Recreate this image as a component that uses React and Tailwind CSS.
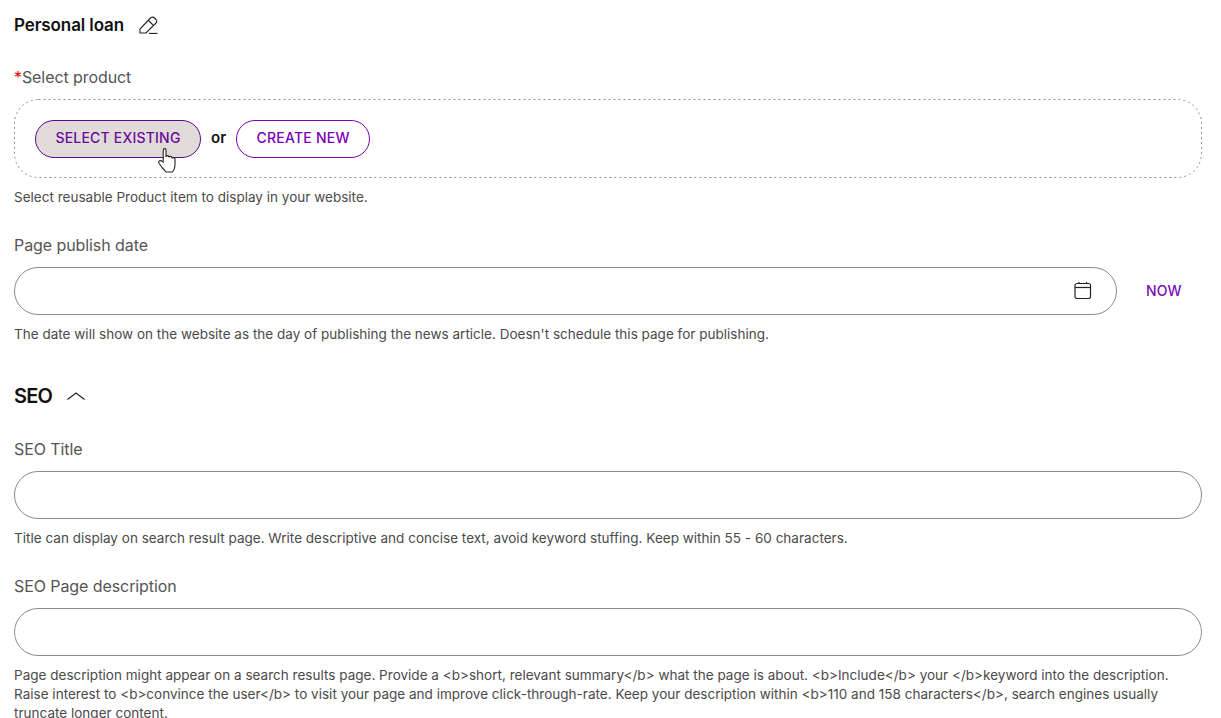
import React from 'react';

const font = "font-['Inter','Liberation_Sans',sans-serif]";

const Label = ({ children }) => (
    <label className="block h-5 text-[16px] leading-5 tracking-[-0.08px] text-[#555555]">{children}</label>
);

const Help = ({ children }) => (
    <p className="text-[13.5px] leading-[19px] tracking-[0.015px] text-[#4a4a4a]">{children}</p>
);

const TextInput = () => (
    <input className="block h-12 w-full rounded-3xl border border-[#8c8c8c] bg-white px-6 outline-none" />
);

export default function App() {
    return (
        <div className={`${font} h-[718px] overflow-hidden bg-white px-[14px] pr-[19px] pt-[15px]`}>
            <div className="flex h-5 items-center">
                <h1 className="text-[17px] font-semibold leading-5 tracking-[-0.1px] text-[#111111]">Personal loan</h1>
                <svg className="ml-[15px]" width="20" height="20" viewBox="0 0 20 20" fill="none" stroke="#222222" strokeWidth="1.1">
                    <path d="M1 18 V14 L11 3.5 Q13.5 1 15.5 3 L17 4.5 Q18.8 6.5 16.5 8.5 L7 18 Z" />
                    <path d="M9.5 5.5 L14 10" />
                    <path d="M10 18.4 H18.5" />
                </svg>
            </div>

            <div className="mt-[32px]">
                <Label><span className="text-[#e00000]">*</span>Select product</Label>
            </div>
            <div className="relative mt-3 flex h-[79px] items-center pl-[21px]">
                {/* dotted outline, css dashed renders too dense here */}
                <svg className="absolute left-0 top-0" width="1188" height="79" fill="none">
                    <rect x="0.5" y="0.5" width="1187" height="78" rx="24" stroke="#8f8f8f" strokeDasharray="2 3" />
                </svg>
                <button className="relative h-[38px] w-[166px] rounded-full border border-[#5b0a8c] bg-[#e0dbd9] pb-[2px] text-[14px] font-medium tracking-[0.2px] text-[#6a0a9c]">
                    SELECT EXISTING
                    <svg className="absolute left-[122px] top-[27px]" width="20" height="25" viewBox="0 0 20 25" fill="#ffffff" stroke="#222222" strokeWidth="1.1">
                        <path d="M5.2 14 V2.2 Q5.2 0.6 6.6 0.6 Q8 0.6 8 2.2 V9 Q8 7.6 9.6 7.6 Q11 7.6 11 9 V9.6 Q11 8.4 12.6 8.4 Q14 8.4 14 10 V10.6 Q14 9.6 15.4 9.6 Q17 9.6 17 11.2 V17 Q17 21 14.5 24 H8 Q6.5 22 4 19.5 L1.2 15.5 Q0 13.6 1.6 12.8 Q3 12.2 4 13.4 Z" />
                    </svg>
                </button>
                <span className="relative ml-[10px] pb-[1px] text-[15px] font-semibold text-[#111111]">or</span>
                <button className="relative ml-[10px] h-[38px] w-[134px] rounded-full border border-[#7a00b8] bg-white pb-[2px] text-[14px] font-medium tracking-[0.25px] text-[#7a00b8]">
                    CREATE NEW
                </button>
            </div>
            <div className="mt-[10px]"><Help>Select reusable Product item to display in your website.</Help></div>

            <div className="mt-[28px]"><Label>Page publish date</Label></div>
            <div className="mt-3 flex items-center">
                <div className="relative w-[1103px]">
                    <TextInput />
                    <svg className="absolute right-[25px] top-[14px]" width="18" height="18" viewBox="0 0 18 18" fill="none" stroke="#222222" strokeWidth="1.2">
                        <rect x="1" y="2.5" width="15.5" height="15" rx="2" />
                        <path d="M1 6.5 H16.5" />
                        <path d="M5 1 V3 M12.5 1 V3" />
                    </svg>
                </div>
                <button className="ml-[29px] pb-[2px] text-[14px] font-medium tracking-[0.2px] text-[#7a10b8]">NOW</button>
            </div>
            <div className="mt-[10px]"><Help>The date will show on the website as the day of publishing the news article. Doesn't schedule this page for publishing.</Help></div>

            <div className="mt-[40px] flex h-6 items-center">
                <h2 className="text-[20px] font-semibold leading-6 tracking-[-0.8px] text-[#111111]">SEO</h2>
                <svg className="ml-[14px]" width="20" height="10" viewBox="0 0 20 10" fill="none" stroke="#222222" strokeWidth="1.2">
                    <path d="M1.5 8.5 L10 2 L18.5 8.5" />
                </svg>
            </div>

            <div className="mt-[31px]"><Label>SEO Title</Label></div>
            <div className="mt-3"><TextInput /></div>
            <div className="mt-[10px]"><Help>Title can display on search result page. Write descriptive and concise text, avoid keyword stuffing. Keep within 55 - 60 characters.</Help></div>

            <div className="mt-[28px]"><Label>SEO Page description</Label></div>
            <div className="mt-3"><TextInput /></div>
            <div className="mt-[10px]">
                <Help>
                    Page description might appear on a search results page. Provide a &lt;b&gt;short, relevant summary&lt;/b&gt; what the page is about. &lt;b&gt;Include&lt;/b&gt; your &lt;/b&gt;keyword into the description. Raise interest to &lt;b&gt;convince the user&lt;/b&gt; to visit your page and improve click-through-rate. Keep your description within &lt;b&gt;110 and 158 characters&lt;/b&gt;, search engines usually truncate longer content.
                </Help>
            </div>
        </div>
    );
}
